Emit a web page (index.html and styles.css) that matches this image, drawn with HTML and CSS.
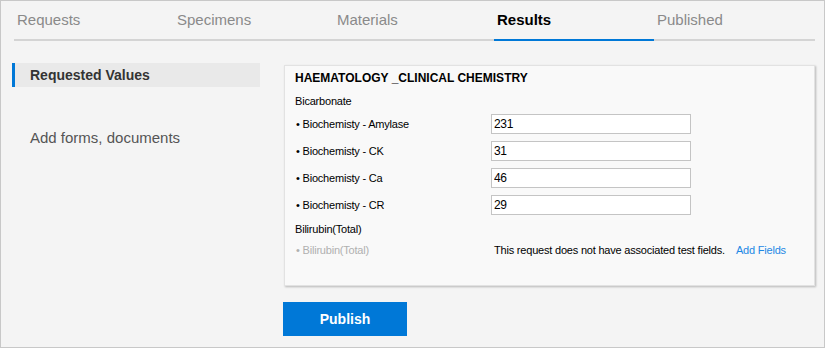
FILE: index.html
```html
<!DOCTYPE html>
<html lang="en">
<head>
    <meta charset="UTF-8">
    <link rel="stylesheet" href="styles.css">
    <title>Results</title>
</head>
<body>
    <div class="page">
        <ul class="tabs">
            <li class="tab">Requests</li>
            <li class="tab">Specimens</li>
            <li class="tab">Materials</li>
            <li class="tab active">Results</li>
            <li class="tab">Published</li>
        </ul>

        <div class="main">
            <div class="sidebar">
                <div class="side-item active">Requested Values</div>
                <div class="side-link">Add forms, documents</div>
            </div>

            <div class="content">
                <div class="card">
                    <div class="card-title">HAEMATOLOGY _CLINICAL CHEMISTRY</div>

                    <div class="group">
                        <div class="group-name">Bicarbonate</div>
                        <div class="rows">
                            <div class="row">
                                <span class="row-label">&bull; Biochemisty - Amylase</span>
                                <input type="text" class="value" value="231">
                            </div>
                            <div class="row">
                                <span class="row-label">&bull; Biochemisty - CK</span>
                                <input type="text" class="value" value="31">
                            </div>
                            <div class="row">
                                <span class="row-label">&bull; Biochemisty - Ca</span>
                                <input type="text" class="value" value="46">
                            </div>
                            <div class="row">
                                <span class="row-label">&bull; Biochemisty - CR</span>
                                <input type="text" class="value" value="29">
                            </div>
                        </div>
                    </div>

                    <div class="group">
                        <div class="group-name">Bilirubin(Total)</div>
                        <div class="rows empty">
                            <div class="row">
                                <span class="row-label muted">&bull; Bilirubin(Total)</span>
                                <span class="no-fields">This request does not have associated test fields.</span>
                                <a class="add-fields" href="#">Add Fields</a>
                            </div>
                        </div>
                    </div>
                </div>

                <button type="button" class="publish">Publish</button>
            </div>
        </div>
    </div>
</body>
</html>
```

FILE: styles.css
```css
* {
    box-sizing: border-box;
}

body {
    margin: 0;
    font-family: "Liberation Sans", Arial, sans-serif;
}

.page {
    width: 825px;
    height: 348px;
    border: 1px solid #c8c8c8;
    background-color: #f4f4f4;
    padding: 0 9px 0 11px;
    overflow: hidden;
}

.tabs {
    list-style: none;
    margin: 0 0 0 2px;
    padding: 0;
    display: flex;
    border-bottom: 2px solid #d4d4d4;
}

.tab {
    width: 160px;
    height: 40px;
    line-height: 38px;
    padding-left: 3px;
    font-size: 15px;
    color: #8a8a8a;
    margin-bottom: -2px;
    border-bottom: 2px solid transparent;
}

.tab.active {
    color: #000;
    font-weight: bold;
    border-bottom-color: #0078d7;
}

.main {
    display: flex;
    gap: 23px;
    margin-top: 22px;
}

.sidebar {
    width: 248px;
    flex-shrink: 0;
}

.side-item {
    height: 24px;
    line-height: 24px;
    padding-left: 15px;
    font-size: 14px;
    font-weight: bold;
    color: #333;
    background-color: #e9e9e9;
    border-left: 3px solid #0078d7;
}

.side-link {
    margin-top: 42px;
    padding-left: 18px;
    font-size: 15px;
    line-height: 18px;
    color: #555;
}

.content {
    flex: 1;
}

.card {
    margin: 2px 0 0 1px;
    height: 221px;
    background-color: #f9f9f9;
    border: 1px solid #e2e2e2;
    box-shadow: 1px 1px 2px rgba(0, 0, 0, 0.25);
    padding: 4px 10px 0;
    font-size: 11px;
    letter-spacing: -0.2px;
    color: #000;
}

.card-title {
    font-size: 12px;
    font-weight: bold;
    letter-spacing: 0;
    line-height: 16px;
}

.group-name {
    line-height: 16px;
    margin-top: 7px;
}

.group + .group .group-name {
    margin-top: 6px;
}

.rows {
    display: flex;
    flex-direction: column;
    gap: 7px;
    margin-top: 5px;
}

.rows.empty {
    margin-top: 3px;
}

.row {
    display: flex;
    align-items: center;
    height: 20px;
}

.row-label {
    width: 196px;
    padding-left: 1px;
    flex-shrink: 0;
}

.row-label.muted {
    color: #b0b0b0;
}

.value {
    width: 200px;
    height: 20px;
    border: 1px solid #c4c4c4;
    background-color: #fff;
    padding: 0 2px;
    font-family: inherit;
    font-size: 12px;
    letter-spacing: -0.3px;
    color: #000;
    outline: none;
}

.no-fields {
    padding-left: 3px;
}

.add-fields {
    margin-left: 11px;
    color: #1e88e5;
    text-decoration: none;
}

.publish {
    margin-top: 16px;
    width: 124px;
    height: 34px;
    border: none;
    background-color: #0078d7;
    color: #fff;
    font-family: inherit;
    font-size: 14px;
    font-weight: bold;
    cursor: pointer;
}
```
